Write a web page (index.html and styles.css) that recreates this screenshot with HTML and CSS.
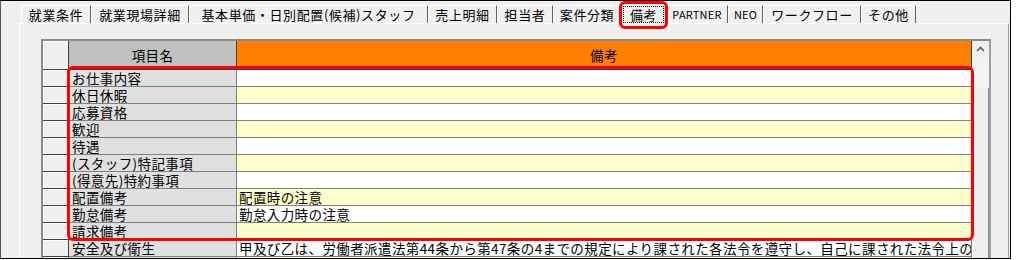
FILE: index.html
```html
<!DOCTYPE html>
<html lang="ja">
<head>
<meta charset="utf-8">
<title>備考</title>
<link rel="stylesheet" href="styles.css">
</head>
<body>
<div class="frame">
  <nav class="tabs">
    <div class="tab">就業条件</div>
    <div class="tab">就業現場詳細</div>
    <div class="tab">基本単価・日別配置(候補)スタッフ</div>
    <div class="tab">売上明細</div>
    <div class="tab">担当者</div>
    <div class="tab">案件分類</div>
    <div class="tab tab-active"><span class="focus">備考</span></div>
    <div class="tab tab-latin">PARTNER</div>
    <div class="tab tab-latin">NEO</div>
    <div class="tab">ワークフロー</div>
    <div class="tab">その他</div>
  </nav>
  <section class="panel">
    <div class="grid">
      <div class="table">
        <div class="cell rh head"></div>
        <div class="cell hname">項目名</div>
        <div class="cell hval">備考</div>

        <div class="cell rh"></div><div class="cell name">お仕事内容</div><div class="cell val"></div>
        <div class="cell rh"></div><div class="cell name">休日休暇</div><div class="cell val alt"></div>
        <div class="cell rh"></div><div class="cell name">応募資格</div><div class="cell val"></div>
        <div class="cell rh"></div><div class="cell name">歓迎</div><div class="cell val alt"></div>
        <div class="cell rh"></div><div class="cell name">待遇</div><div class="cell val"></div>
        <div class="cell rh"></div><div class="cell name">(スタッフ)特記事項</div><div class="cell val alt"></div>
        <div class="cell rh"></div><div class="cell name">(得意先)特約事項</div><div class="cell val"></div>
        <div class="cell rh"></div><div class="cell name">配置備考</div><div class="cell val alt">配置時の注意</div>
        <div class="cell rh"></div><div class="cell name">勤怠備考</div><div class="cell val">勤怠入力時の注意</div>
        <div class="cell rh"></div><div class="cell name">請求備考</div><div class="cell val alt"></div>
        <div class="cell rh"></div><div class="cell name">安全及び衛生</div><div class="cell val">甲及び乙は、労働者派遣法第44条から第47条の4までの規定により課された各法令を遵守し、自己に課された法令上の</div>
        <div class="cell rh"></div><div class="cell name"></div><div class="cell val alt"></div>
      </div>
      <div class="scrollbar">
        <div class="sb-btn">
          <svg width="9" height="6" viewBox="0 0 9 6"><path d="M1 5 L4.5 1.5 L8 5" fill="none" stroke="#606060" stroke-width="1.6"/></svg>
        </div>
        <div class="sb-track"></div>
        <div class="sb-thumb"></div>
      </div>
    </div>
  </section>
  <div class="mark mark-tab"></div>
  <div class="mark mark-rows"></div>
</div>
</body>
</html>
```

FILE: styles.css
```css
html, body {
  margin: 0;
  padding: 0;
  background: #ffffff;
}

body {
  font-family: "Noto Sans CJK JP", "Noto Sans", sans-serif;
  color: #000;
}

.frame {
  position: relative;
  width: 1009px;
  height: 257px;
  border: 1px solid #000;
  border-left-color: #555;
  background: #f0f0f0;
  overflow: hidden;
}

/* ---------- tabs ---------- */
.tabs {
  display: grid;
  grid-template-columns: 70px 98px 239px 69px 56px 68px 45px 62px 35px 98px 55px;
  margin: 4px 0 0 20px;
  height: 18px;
}

.tab {
  box-sizing: border-box;
  height: 18px;
  border-top: 1px solid #fff;
  border-left: 1px solid #fff;
  border-right: 1px solid #606060;
  font-size: 13px;
  line-height: 17px;
  letter-spacing: 0.6px;
  text-align: center;
  white-space: nowrap;
}

.tab-latin {
  font-size: 11px;
  letter-spacing: 0.2px;
}

.tab-active {
  display: flex;
  align-items: center;
  justify-content: center;
}

.focus {
  display: block;
  box-sizing: border-box;
  width: 41px;
  height: 17px;
  line-height: 15px;
  border: 1px dotted #000;
}

/* ---------- panel ---------- */
.panel {
  box-sizing: border-box;
  width: 990px;
  height: 240px;
  margin-left: 18px;
  border-top: 1px solid #fff;
  border-left: 1px solid #fff;
  border-right: 1px solid #a0a0a0;
  padding: 15px 0 0 21px;
}

.grid {
  box-sizing: border-box;
  display: flex;
  width: 950px;
  height: 230px;
  border: 2px solid #a0a0a0;
  border-top-color: #8a8a8a;
  border-left-color: #8a8a8a;
  background: #f0f0f0;
}

.table {
  display: grid;
  grid-template-columns: 26px 168px 735px;
  grid-template-rows: 29px;
  grid-auto-rows: 17px;
  align-content: start;
}

.cell {
  box-sizing: border-box;
  border-right: 1px solid #808080;
  border-bottom: 1px solid #808080;
  font-size: 13.5px;
  line-height: 16px;
  letter-spacing: 0.4px;
  white-space: nowrap;
}

.rh {
  background: #f0f0f0;
  border-right-color: #404040;
  border-bottom-color: #404040;
  box-shadow: inset 1px 1px 0 #fff;
}

.hname,
.hval {
  display: flex;
  align-items: center;
  justify-content: center;
  border-right-color: #404040;
  border-bottom-color: #404040;
}

.hname {
  background: #c0c0c0;
}

.hval {
  background: #ff8000;
}

.name {
  background: #e0e0e0;
  padding-left: 3px;
}

.val {
  background: #ffffff;
  padding-left: 2px;
  overflow-x: clip;
  overflow-y: visible;
}

.val.alt {
  background: #ffffcc;
}

/* ---------- scrollbar ---------- */
.scrollbar {
  width: 17px;
  display: flex;
  flex-direction: column;
}

.sb-btn {
  height: 16px;
  display: flex;
  align-items: center;
  justify-content: center;
  background: #f0f0f0;
}

.sb-track {
  height: 31px;
  background-color: #fafafa;
  background-image:
    linear-gradient(45deg, #ececec 25%, transparent 25%, transparent 75%, #ececec 75%),
    linear-gradient(45deg, #ececec 25%, transparent 25%, transparent 75%, #ececec 75%);
  background-size: 2px 2px;
  background-position: 0 0, 1px 1px;
}

.sb-thumb {
  flex: 1;
  box-sizing: border-box;
  background: #f0f0f0;
  border-left: 1px solid #fff;
  border-right: 1px solid #8a8a8a;
}

/* ---------- red highlight marks ---------- */
.mark {
  position: absolute;
  box-sizing: border-box;
  border: 3px solid #ff0000;
  border-radius: 6px;
  pointer-events: none;
}

.mark-tab {
  left: 618px;
  top: 0;
  width: 49px;
  height: 28px;
}

.mark-rows {
  left: 66px;
  top: 65px;
  width: 907px;
  height: 175px;
}
```
